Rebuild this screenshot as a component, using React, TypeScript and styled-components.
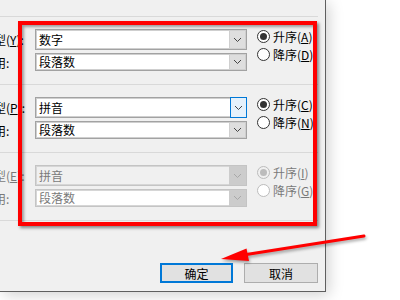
import styled, { createGlobalStyle } from "styled-components";

const GlobalStyle = createGlobalStyle`
  html, body {
    margin: 0;
    padding: 0;
    background: #ffffff;
  }
  body {
    font-family: "Noto Sans CJK SC", "Noto Sans", sans-serif;
    font-size: 12px;
    color: #000;
  }
`;

interface optionProps {
  label: string;
  key: string;
  checked: boolean;
}
interface groupProps {
  typeKey: string;
  typeValue: string;
  useValue: string;
  focused?: boolean;
  disabled?: boolean;
  options: optionProps[];
}

const groups: groupProps[] = [
  {
    typeKey: "Y",
    typeValue: "数字",
    useValue: "段落数",
    options: [
      { label: "升序", key: "A", checked: true },
      { label: "降序", key: "D", checked: false },
    ],
  },
  {
    typeKey: "P",
    typeValue: "拼音",
    useValue: "段落数",
    focused: true,
    options: [
      { label: "升序", key: "C", checked: true },
      { label: "降序", key: "N", checked: false },
    ],
  },
  {
    typeKey: "E",
    typeValue: "拼音",
    useValue: "段落数",
    disabled: true,
    options: [
      { label: "升序", key: "I", checked: true },
      { label: "降序", key: "G", checked: false },
    ],
  },
];

const Chevron = ({ color }: { color: string }) => (
  <svg width="9" height="6" viewBox="0 0 9 6">
    <polyline points="1,1 4.5,4.5 8,1" fill="none" stroke={color} strokeWidth="1" />
  </svg>
);

const App = () => {
  return (
    <>
      <GlobalStyle />
      <Stage>
        <Dialog>
          {groups.map((g) => (
            <Group key={g.typeKey}>
              <Fields>
                <FieldRow>
                  <Label $disabled={g.disabled}>
                    类型(<u>{g.typeKey}</u>):
                  </Label>
                  <Combo $tall $disabled={g.disabled} $fill={g.disabled ? "#f0f0f0" : "#fff"}>
                    <ComboText>{g.typeValue}</ComboText>
                    <DropButton $focused={g.focused} $disabled={g.disabled}>
                      <Chevron color={g.disabled ? "#a8a8a8" : "#444"} />
                    </DropButton>
                  </Combo>
                </FieldRow>
                <FieldRow>
                  <Label $disabled={g.disabled}>使用:</Label>
                  <Combo $disabled={g.disabled} $fill="#fff">
                    <ComboText>{g.useValue}</ComboText>
                    <DropButton $disabled={g.disabled}>
                      <Chevron color={g.disabled ? "#a8a8a8" : "#444"} />
                    </DropButton>
                  </Combo>
                </FieldRow>
              </Fields>
              <Radios>
                {g.options.map((o) => (
                  <RadioRow key={o.key} $disabled={g.disabled}>
                    <RadioDot $checked={o.checked} $disabled={g.disabled} />
                    <span>
                      {o.label}(<u>{o.key}</u>)
                    </span>
                  </RadioRow>
                ))}
              </Radios>
            </Group>
          ))}
          <Footer>
            <PushButton $primary>确定</PushButton>
            <PushButton>取消</PushButton>
          </Footer>
        </Dialog>
        <Highlight />
        <Arrow width="400" height="300" viewBox="0 0 400 300">
          <line x1="364" y1="236" x2="240" y2="255.5" stroke="#ff0000" strokeWidth="3" strokeLinecap="round" />
          <polygon points="221,259 246.5,248.5 249,261" fill="#ff0000" />
        </Arrow>
      </Stage>
    </>
  );
};

const Stage = styled.div`
  position: relative;
  width: 400px;
  height: 300px;
  overflow: hidden;
  background: #ffffff;
`;

const Dialog = styled.div`
  box-sizing: border-box;
  width: 326px;
  height: 292px;
  padding-top: 16px;
  background: #f0f0f0;
  border-right: 1px solid #5f5f5f;
  border-bottom: 1px solid #5f5f5f;
  box-shadow: 3px 3px 14px rgba(0, 0, 0, 0.18);
  display: flex;
  flex-direction: column;
  overflow: hidden;
`;

const Group = styled.div`
  display: flex;
  align-items: flex-start;
  margin-right: 7px;
  padding: 12px 0 13px;
  border-top: 1px solid #d9d9d9;
`;

const Fields = styled.div`
  display: flex;
  flex-direction: column;
  gap: 3px;
`;

const FieldRow = styled.div`
  display: flex;
  align-items: center;
`;

const Label = styled.div<{ $disabled?: boolean }>`
  flex-shrink: 0;
  width: 53px;
  margin-left: -18px;
  white-space: nowrap;
  color: ${(p) => (p.$disabled ? "#7a7a7a" : "#000")};
  u {
    text-underline-offset: 1px;
  }
`;

const Combo = styled.div<{ $tall?: boolean; $disabled?: boolean; $fill: string }>`
  box-sizing: border-box;
  width: 212px;
  height: ${(p) => (p.$tall ? "21px" : "18px")};
  display: flex;
  align-items: stretch;
  background: ${(p) => p.$fill};
  border: 1px solid ${(p) => (p.$disabled ? "#c4c4c4" : "#a2a2a2")};
  box-shadow: inset 0 0 0 1px ${(p) => (p.$disabled ? "#d6d6d6" : "#cfcfcf")};
  color: ${(p) => (p.$disabled ? "#7a7a7a" : "#000")};
`;

const ComboText = styled.div`
  flex: 1;
  display: flex;
  align-items: center;
  padding-left: 3px;
  line-height: 1;
`;

const DropButton = styled.div<{ $focused?: boolean; $disabled?: boolean }>`
  box-sizing: border-box;
  width: 17px;
  display: flex;
  align-items: center;
  justify-content: center;
  background: ${(p) => (p.$focused ? "#e5f1fb" : p.$disabled ? "#cccccc" : "#dedede")};
  border: 1px solid ${(p) => (p.$focused ? "#0078d7" : p.$disabled ? "#cccccc" : "#cfcfcf")};
  margin: ${(p) => (p.$focused ? "-1px -1px -1px 0" : "0")};
`;

const Radios = styled.div`
  display: flex;
  flex-direction: column;
  gap: 4px;
  margin-left: 10px;
`;

const RadioRow = styled.div<{ $disabled?: boolean }>`
  display: flex;
  align-items: center;
  gap: 3px;
  height: 14px;
  white-space: nowrap;
  color: ${(p) => (p.$disabled ? "#7a7a7a" : "#000")};
`;

const RadioDot = styled.span<{ $checked: boolean; $disabled?: boolean }>`
  box-sizing: border-box;
  width: 13px;
  height: 13px;
  border-radius: 50%;
  border: 1px solid ${(p) => (p.$disabled ? "#bcbcbc" : "#333")};
  background: ${(p) => (p.$disabled && p.$checked ? "#f0f0f0" : "#fff")};
  display: flex;
  align-items: center;
  justify-content: center;
  &::after {
    content: "";
    display: ${(p) => (p.$checked ? "block" : "none")};
    width: 7px;
    height: 7px;
    border-radius: 50%;
    background: ${(p) => (p.$disabled ? "#bcbcbc" : "#333")};
  }
`;

const Footer = styled.div`
  flex: 1;
  display: flex;
  align-items: flex-end;
  justify-content: flex-end;
  gap: 11px;
  margin-right: 7px;
  padding-bottom: 8px;
  border-top: 1px solid #d9d9d9;
`;

const PushButton = styled.div<{ $primary?: boolean }>`
  box-sizing: border-box;
  width: ${(p) => (p.$primary ? "73px" : "74px")};
  height: 20px;
  display: flex;
  align-items: center;
  justify-content: center;
  background: #e1e1e1;
  border: ${(p) => (p.$primary ? "2px solid #0078d7" : "1px solid #adadad")};
`;

const Highlight = styled.div`
  position: absolute;
  left: 18px;
  top: 21px;
  width: 299px;
  height: 205px;
  box-sizing: border-box;
  border: 4px solid #ff0000;
  box-shadow: 2px 2px 3px rgba(0, 0, 0, 0.45), inset 2px 2px 3px rgba(0, 0, 0, 0.35);
  pointer-events: none;
`;

const Arrow = styled.svg`
  position: absolute;
  left: 0;
  top: 0;
  pointer-events: none;
  filter: drop-shadow(1px 2px 1.5px rgba(0, 0, 0, 0.35));
`;

export default App;
